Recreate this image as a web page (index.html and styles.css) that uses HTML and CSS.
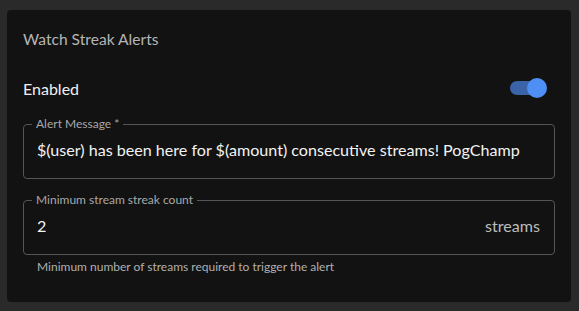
FILE: index.html
```html
<!DOCTYPE html>
<html>
<head>
<meta charset="utf-8">
<link rel="stylesheet" href="styles.css">
</head>
<body>
<div class="card">
  <div class="title">Watch Streak Alerts</div>
  <div class="row">
    <span class="row-label">Enabled</span>
    <span class="switch"><span class="track"></span><span class="knob"></span></span>
  </div>
  <fieldset class="field">
    <legend>Alert Message *</legend>
    <div class="value">$(user) has been here for $(amount) consecutive streams! PogChamp</div>
  </fieldset>
  <fieldset class="field field-second">
    <legend>Minimum stream streak count</legend>
    <div class="value split"><span>2</span><span class="unit">streams</span></div>
  </fieldset>
  <div class="helper">Minimum number of streams required to trigger the alert</div>
</div>
</body>
</html>
```
FILE: styles.css
```css
html, body { margin: 0; padding: 0; }
body {
  background: #2a2a2a;
  font-family: "Lato", "Liberation Sans", sans-serif;
  width: 579px;
  height: 311px;
  overflow: hidden;
}
.card {
  margin: 10px 0 0 7px;
  width: 564px;
  height: 292px;
  background: #121212;
  border-radius: 4px;
  box-sizing: border-box;
  padding: 0 16px 0 16px;
}
.title {
  padding-top: 20px;
  font-size: 15.6px;
  color: #b5b5b5;
  line-height: 18px;
}
.row {
  display: flex;
  align-items: center;
  justify-content: space-between;
  margin-top: 29px;
  height: 22px;
  padding-right: 8px;
}
.row-label { font-size: 16px; color: #f0f0f0; }
.switch { position: relative; width: 37px; height: 22px; }
.track {
  position: absolute; left: 0; top: 4px; width: 30px; height: 14px;
  border-radius: 7px; background: #3a63a8;
}
.knob {
  position: absolute; right: 0; top: 1px; width: 20px; height: 20px;
  border-radius: 50%; background: #4d8ff5;
}
.field {
  margin: 19px 0 0 0;
  padding: 0 13px;
  border: 1px solid #555;
  border-radius: 4px;
  height: 61px;
  box-sizing: border-box;
  min-width: 0;
}
.field legend {
  padding: 0 4px;
  margin-left: -5px;
  font-size: 12px;
  color: #a8a8a8;
  line-height: 12px;
}
.value {
  font-size: 16.1px;
  color: #f2f2f2;
  line-height: 20px;
  margin-top: 10px;
  white-space: nowrap;
}
.field-second { margin-top: 15px; }
.split { display: flex; justify-content: space-between; }
.unit { color: #bcbcbc; padding-right: 1px; }
.helper {
  font-size: 12px;
  line-height: 14px;
  color: #b0b0b0;
  padding: 5px 0 0 14px;
}
```
